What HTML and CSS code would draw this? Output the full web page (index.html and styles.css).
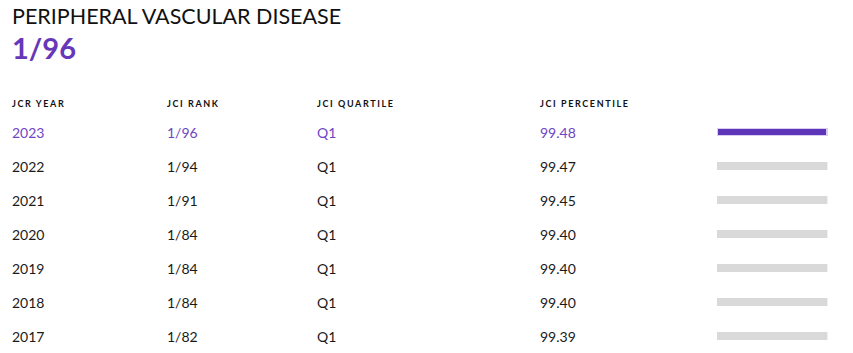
FILE: index.html
```html
<!DOCTYPE html>
<html>
<head>
<meta charset="utf-8">
<link rel="stylesheet" href="styles.css">
</head>
<body>
<div class="page">
  <h1 class="title">PERIPHERAL VASCULAR DISEASE</h1>
  <div class="rank">1/96</div>
  <div class="table">
    <div class="row head">
      <div>JCR YEAR</div><div>JCI RANK</div><div>JCI QUARTILE</div><div>JCI PERCENTILE</div><div></div>
    </div>
    <div class="row active">
      <div>2023</div><div>1/96</div><div>Q1</div><div>99.48</div>
      <div class="bar"><div class="fill" style="width:99.48%"></div></div>
    </div>
    <div class="row">
      <div>2022</div><div>1/94</div><div>Q1</div><div>99.47</div>
      <div class="bar"><div class="fill" style="width:99.47%"></div></div>
    </div>
    <div class="row">
      <div>2021</div><div>1/91</div><div>Q1</div><div>99.45</div>
      <div class="bar"><div class="fill" style="width:99.45%"></div></div>
    </div>
    <div class="row">
      <div>2020</div><div>1/84</div><div>Q1</div><div>99.40</div>
      <div class="bar"><div class="fill" style="width:99.40%"></div></div>
    </div>
    <div class="row">
      <div>2019</div><div>1/84</div><div>Q1</div><div>99.40</div>
      <div class="bar"><div class="fill" style="width:99.40%"></div></div>
    </div>
    <div class="row">
      <div>2018</div><div>1/84</div><div>Q1</div><div>99.40</div>
      <div class="bar"><div class="fill" style="width:99.40%"></div></div>
    </div>
    <div class="row">
      <div>2017</div><div>1/82</div><div>Q1</div><div>99.39</div>
      <div class="bar"><div class="fill" style="width:99.39%"></div></div>
    </div>
  </div>
</div>
</body>
</html>
```
FILE: styles.css
```css
html, body { margin: 0; padding: 0; background: #fff; }
body { font-family: "Lato", "Open Sans", sans-serif; color: #1a1a1a; }
.page { padding: 2px 25px 0 12px; }
.title {
  margin: 0;
  font-size: 21.5px;
  font-weight: 400;
  line-height: 28px;
  color: #111;
}
.rank {
  font-size: 29px;
  font-weight: 700;
  line-height: 36px;
  color: #6637b8;
}
.table { margin-top: 25px; }
.row {
  display: grid;
  grid-template-columns: 155px 150px 223px 177px 111px;
  align-items: center;
  height: 34px;
  font-size: 14px;
}
.row.head {
  height: 24px;
  font-size: 9px;
  font-weight: 700;
  letter-spacing: 1.6px;
  color: #111;
}
.row.active { color: #6e45c4; }
.bar {
  height: 8px;
  background: #f0f0f0;
  box-sizing: border-box;
}
.fill { height: 100%; background: #d9d9d9; }
.active .bar { background: #d8cdf0; border: 1px solid #d8cdf0; }
.active .fill { background: #5e35b8; }
```
